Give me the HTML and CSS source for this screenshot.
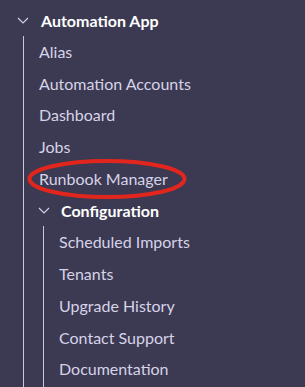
FILE: index.html
```html
<!DOCTYPE html>
<html lang="en">
<head>
    <meta charset="UTF-8">
    <meta name="viewport" content="width=device-width, initial-scale=1.0">
    <title>Automation App</title>
    <link rel="stylesheet" href="styles.css">
</head>
<body>
    <nav class="tree">
        <div class="group">
            <div class="group-head">
                <svg class="chevron" viewBox="0 0 12 7"><polyline points="1,1 6,6 11,1" /></svg>
                <span>Automation App</span>
            </div>
            <ul class="group-items">
                <li class="item">Alias</li>
                <li class="item">Automation Accounts</li>
                <li class="item">Dashboard</li>
                <li class="item">Jobs</li>
                <li class="item item-marked">
                    Runbook Manager
                    <svg class="mark" viewBox="0 0 164 44"><ellipse cx="82" cy="22" rx="77.5" ry="18" /></svg>
                </li>
                <li class="group nested">
                    <div class="group-head">
                        <svg class="chevron" viewBox="0 0 12 7"><polyline points="1,1 6,6 11,1" /></svg>
                        <span>Configuration</span>
                    </div>
                    <ul class="group-items">
                        <li class="item">Scheduled Imports</li>
                        <li class="item">Tenants</li>
                        <li class="item">Upgrade History</li>
                        <li class="item">Contact Support</li>
                        <li class="item">Documentation</li>
                    </ul>
                </li>
            </ul>
        </div>
    </nav>
</body>
</html>
```

FILE: styles.css
```css
* {
    box-sizing: border-box;
}

html,
body {
    margin: 0;
    padding: 0;
}

body {
    background-color: #3c3a52;
    font-family: Lato, "Open Sans", sans-serif;
    font-size: 16px;
    color: #d6d3e8;
    height: 387px;
    overflow: hidden;
}

.tree {
    padding: 4px 0 0 17px;
}

.group-head {
    display: flex;
    align-items: center;
    height: 32px;
    color: #ffffff;
    font-weight: 700;
}

.group-head .chevron {
    width: 12px;
    height: 7px;
    margin-right: 12px;
    fill: none;
    stroke: #d6d3e8;
    stroke-width: 1.1;
}

.group-items {
    list-style: none;
    margin: 0 0 0 6px;
    padding: 0 0 0 15px;
    border-left: 1px solid #c9c6db;
}

.item {
    position: relative;
    height: 31.7px;
    line-height: 31.7px;
    white-space: nowrap;
}

.item-marked .mark {
    position: absolute;
    left: -14.5px;
    top: -6px;
    width: 164px;
    height: 44px;
    overflow: visible;
    fill: none;
    stroke: #e3261d;
    stroke-width: 4;
}

.nested .group-head .chevron {
    margin-left: -1px;
    margin-right: 11px;
}

.nested .group-items {
    margin-left: 4px;
    padding-bottom: 6px;
}
```
